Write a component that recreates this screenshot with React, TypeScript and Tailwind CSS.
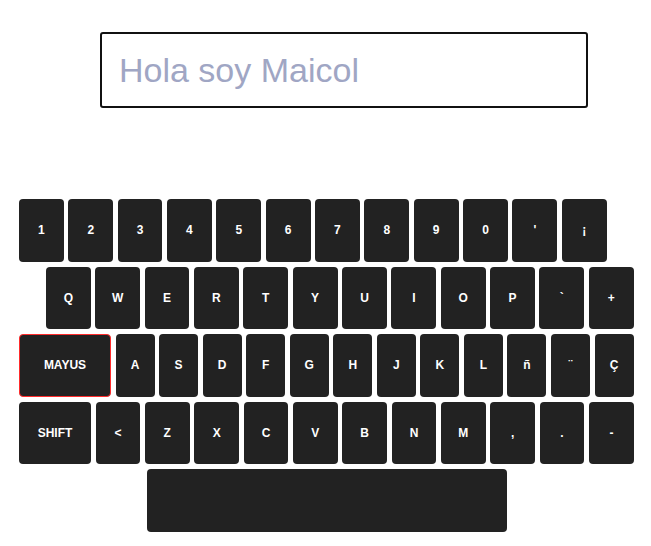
import React from 'react'

const row1 = ['1', '2', '3', '4', '5', '6', '7', '8', '9', '0', "'", '¡']
const row2 = ['Q', 'W', 'E', 'R', 'T', 'Y', 'U', 'I', 'O', 'P', '`', '+']
const row3 = ['A', 'S', 'D', 'F', 'G', 'H', 'J', 'K', 'L', 'ñ', '¨', 'Ç']
const row4 = ['<', 'Z', 'X', 'C', 'V', 'B', 'N', 'M', ',', '.', '-']

function Key({ label, className = 'w-[44.8px]' }: { label: string; className?: string }) {
  return (
    <button
      className={`${className} h-[62.5px] shrink-0 rounded-[4px] bg-[#222222] text-white text-[12px] font-bold flex items-center justify-center`}
    >
      {label}
    </button>
  )
}

export default function App() {
  return (
    <div className="min-h-screen bg-white font-['Liberation_Sans',Arial,sans-serif]">
      {/* Text field */}
      <div className="pt-[32px] pl-[100px]">
        <input
          type="text"
          placeholder="Hola soy Maicol"
          className="w-[488px] h-[76px] border-2 border-[#111111] rounded-[3px] px-[17px] text-[34px] text-[#333] placeholder:text-[#a0a6c4] outline-none"
        />
      </div>

      {/* Keyboard */}
      <div className="mt-[91px] ml-[19px] w-[615px] flex flex-col gap-[5px]">
        <div className="flex gap-[4.56px]">
          {row1.map((k) => (
            <Key key={k} label={k} />
          ))}
        </div>
        <div className="flex gap-[4.56px] pl-[27px]">
          {row2.map((k) => (
            <Key key={k} label={k} />
          ))}
        </div>
        <div className="flex gap-[4.56px]">
          <Key label="MAYUS" className="w-[92px] border border-[#ff2b2b]" />
          {row3.map((k) => (
            <Key key={k} label={k} className="w-[39px]" />
          ))}
        </div>
        <div className="flex gap-[4.56px]">
          <Key label="SHIFT" className="w-[72px]" />
          {row4.map((k) => (
            <Key key={k} label={k} />
          ))}
        </div>
        <div className="flex pl-[128px]">
          <Key label="" className="w-[360px]" />
        </div>
      </div>
    </div>
  )
}
